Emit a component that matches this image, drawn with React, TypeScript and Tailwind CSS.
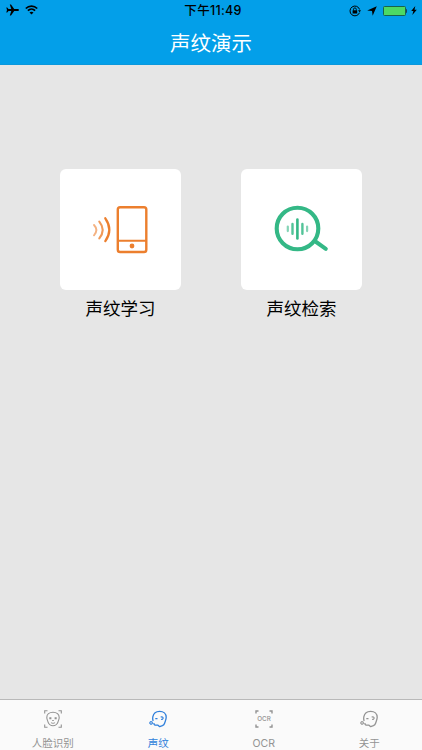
import type { ReactNode } from 'react'

type Tab = 'face' | 'voice' | 'ocr' | 'about'

const TABS: Array<{ id: Tab; label: string; icon: ReactNode }> = [
  { id: 'face', label: '人脸识别', icon: <FaceIcon /> },
  { id: 'voice', label: '声纹', icon: <HeadIcon /> },
  { id: 'ocr', label: 'OCR', icon: <OcrIcon /> },
  { id: 'about', label: '关于', icon: <HeadIcon /> },
]

function FaceIcon() {
  return (
    <svg width="18" height="18" viewBox="0 0 18 18" fill="none" stroke="currentColor" strokeWidth="1.1">
      <path d="M.7 3.500V.7h2.800M14.500.7h2.800v2.800M17.300 14.500v2.800h-2.800M3.500 17.300H.7v-2.800" />
      <path d="M9 2.200c-3.800 0-6.200 2.200-6.200 5.200 0 1.800.7 2.600 1.100 4.300.5 2.300 2.900 4.100 5.100 4.100s4.600-1.800 5.100-4.100c.4-1.700 1.100-2.500 1.100-4.300 0-3-2.400-5.200-6.200-5.200z" />
      <path d="M5.300 8.300h2.100M10.600 8.300h2.100" strokeWidth="1.900" />
      <path d="M8.200 10.500h1.600M7 12.600q2 1.200 4 0" />
    </svg>
  )
}

function HeadIcon() {
  return (
    <svg width="18" height="18" viewBox="0 0 18 18" fill="none" stroke="currentColor" strokeWidth="1.3" strokeLinejoin="round">
      <path d="M4.100 11C3.600 9.500 3.500 8.400 3.800 6.900 4.500 3.400 7.200 1.300 10.600 1.300c4 0 6.600 2.500 6.600 5.900 0 2.500-1 4-1.600 6-.4 1.400-1.200 2.100-2.200 2.500l-2.700 1-2-1.600c-1.400.2-2.900.1-3.400-.5-.4-.5-.4-1-.4-1.600" />
      <path d="M6.300 8.700h2.200M11.700 7.100c1.200-.5 2.500 0 2.400 1.100-.1.900-1.100 1.400-2 1.100" strokeWidth="1.200" />
      <circle cx="2.100" cy="12.900" r="1.500" fill="currentColor" fillOpacity="0.500" strokeWidth="0.800" />
    </svg>
  )
}

function OcrIcon() {
  return (
    <svg width="18" height="18" viewBox="0 0 18 18" fill="none" stroke="currentColor" strokeWidth="1.400">
      <path d="M1 3.500V1h2.500M14.500 1H17v2.500M17 14.500V17h-2.500M3.500 17H1v-2.500" />
      <text x="9" y="11.300" textAnchor="middle" textLength="13.500" lengthAdjust="spacingAndGlyphs" fontSize="6.300" fontWeight="500" fontFamily="Inter, sans-serif" fill="currentColor" stroke="none">
        OCR
      </text>
    </svg>
  )
}

function PhoneWaveIcon() {
  return (
    <svg width="121" height="121" viewBox="0 0 121 121" fill="none" stroke="#ec7f2e" strokeWidth="2.400" strokeLinecap="round">
      <rect x="57.800" y="38.200" width="28.500" height="44.800" rx="2.300" />
      <path d="M58 71.700h28" strokeWidth="2" />
      <circle cx="72" cy="77" r="2.400" fill="#ec7f2e" stroke="none" />
      <path d="M45.300 49.300q8 11.300 0 22.800" strokeWidth="2.300" />
      <path d="M39.300 52.600q6.800 8.200 0 16.800" strokeWidth="2.100" opacity="0.800" />
      <path d="M34 56q4.800 5 0 10.300" strokeWidth="1.900" opacity="0.600" />
    </svg>
  )
}

function VoiceSearchIcon() {
  return (
    <svg width="121" height="121" viewBox="0 0 121 121" fill="none" stroke="#34b886" strokeLinecap="round">
      <circle cx="56.500" cy="59.500" r="20.800" strokeWidth="4.100" />
      <path d="M74.500 72.500L84.800 79.800" strokeWidth="4" />
      <path d="M56.400 50.500v19" strokeWidth="2.600" />
      <path d="M51.500 55v9.800M61.400 55v9.800" strokeWidth="2.400" opacity="0.850" />
      <path d="M46.800 57.500v4.600M66.100 57.500v4.600" strokeWidth="2.200" opacity="0.600" />
    </svg>
  )
}

function StatusBar() {
  return (
    <div className="grid h-5 grid-cols-[1fr_auto_1fr] text-black">
      <div className="flex h-5 items-center gap-[6px] pl-[6px]">
        <svg width="13" height="12" viewBox="0 0 13 12" fill="currentColor">
          <path d="M13 6c0 .6-.8 1-1.700 1H8.200L5 11.500H3.800L5.300 7H2.500L1.200 8.600H.3L1 6 .3 3.400h.9L2.500 5h2.800L3.800.5H5L8.200 5h3.100c.9 0 1.700.4 1.700 1z" />
        </svg>
        <svg width="13" height="10" viewBox="0 0 13 10" fill="none" stroke="currentColor" strokeWidth="1.700">
          <path d="M.8 3.500c3.200-3.200 8.200-3.200 11.400 0M2.900 5.700c2-2 5.200-2 7.200 0" />
          <path d="M6.500 9.600L4.500 7.400c1.100-1 2.900-1 4 0z" fill="currentColor" stroke="none" />
        </svg>
      </div>
      <span className="pt-px pl-1 text-[12.500px] leading-5 font-medium tracking-[0.300px]">下午11:49</span>
      <div className="flex h-[21px] items-center justify-end pr-[5px]">
        <svg className="mr-[6px]" width="12" height="12" viewBox="0 0 12 12" fill="none" stroke="currentColor">
          <path d="M10.500 7.700A4.900 4.900 0 1 1 10.600 4.500" />
          <path d="M9 5.300h3L10.600 7.300z" fill="currentColor" stroke="none" />
          <rect x="3.600" y="5.300" width="4.600" height="3.200" fill="currentColor" stroke="none" />
          <path d="M4.500 5.500V4.300a1.400 1.400 0 0 1 2.800 0v1.200" strokeWidth="0.900" />
        </svg>
        <svg className="mr-[6px]" width="10" height="10" viewBox="0 0 9 9" fill="currentColor">
          <path d="M8.800.2L5.100 8.800 4.500 4.600.2 4z" />
        </svg>
        <div className="h-[10px] w-[23px] rounded-[1.500px] border border-[#17634e] bg-[#4cd964]" />
        <div className="mr-1 h-1 w-[1.500px] rounded-r-full bg-[#17455e]" />
        <svg width="6" height="9" viewBox="0 0 6 9" fill="currentColor">
          <path d="M4.300 0L.2 5.100h2.200L1.300 9 5.800 3.700H3.500z" />
        </svg>
      </div>
    </div>
  )
}

function FeatureCard({ label, children }: { label: string; children: ReactNode }) {
  return (
    <button type="button" className="flex w-[121px] flex-col items-center">
      <span className="block size-[121px] rounded-[6px] bg-white">{children}</span>
      <span className="mt-[6px] text-[17.500px] leading-[26px] text-black">{label}</span>
    </button>
  )
}

export default function App() {
  const active: Tab = 'voice'

  return (
    <div className="flex h-screen flex-col bg-[#e6e6e6] font-[Inter,'Noto_Sans_CJK_SC',sans-serif]">
      <header className="h-[65px] shrink-0 border-b border-[#0b98dc] bg-[#039fe9]">
        <StatusBar />
        <h1 className="pt-px text-center text-[20.500px] leading-[45px] text-white">声纹演示</h1>
      </header>
      <main className="flex flex-1 items-start justify-center gap-[60px] pt-[104px]">
        <FeatureCard label="声纹学习">
          <PhoneWaveIcon />
        </FeatureCard>
        <FeatureCard label="声纹检索">
          <VoiceSearchIcon />
        </FeatureCard>
      </main>
      <nav className="grid h-[51px] shrink-0 grid-cols-4 border-t border-[#b9b9b9] bg-[#fafafa]">
        {TABS.map((t) => (
          <button
            key={t.id}
            type="button"
            className={`flex flex-col items-center pt-[10px] ${t.id === active ? 'text-[#2f7fdb]' : 'text-[#939393]'}`}
          >
            {t.icon}
            <span className="mt-[8px] text-[10.500px] leading-4">{t.label}</span>
          </button>
        ))}
      </nav>
    </div>
  )
}
